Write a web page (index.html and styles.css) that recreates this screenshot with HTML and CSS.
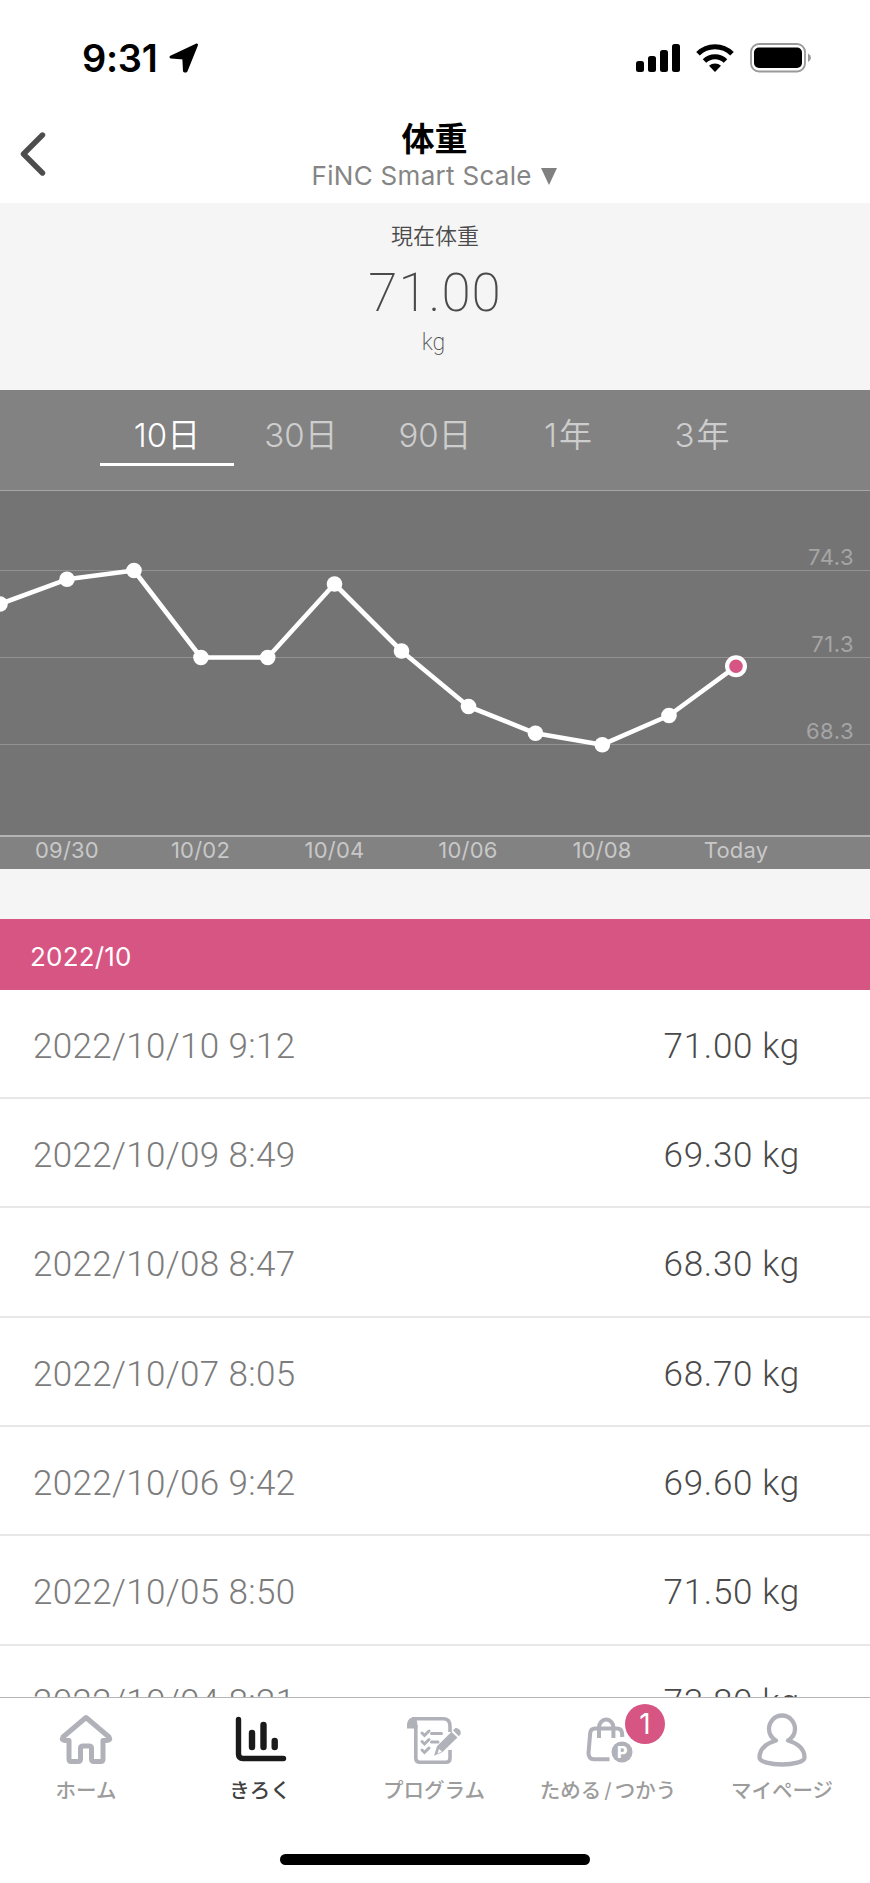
FILE: index.html
```html
<!DOCTYPE html>
<html lang="ja">
<head>
    <meta charset="UTF-8">
    <meta name="viewport" content="width=device-width, initial-scale=1.0">
    <title>体重</title>
    <link rel="stylesheet" href="styles.css">
</head>
<body>
    <div class="status-bar">
        <span class="time">9:31</span>
        <svg class="location" width="30" height="30" viewBox="0 0 30 30">
            <path d="M27.500 2 L2 14 L14.800 15 L15.500 28 L17 28 Z" fill="#000" stroke="#000" stroke-width="3" stroke-linejoin="round"/>
        </svg>
        <svg class="signal" width="44" height="28" viewBox="0 0 44 28">
            <rect x="0" y="17" width="8" height="11" rx="2.500"/>
            <rect x="12" y="12" width="8" height="16" rx="2.500"/>
            <rect x="24" y="6" width="8" height="22" rx="2.500"/>
            <rect x="36" y="0" width="8" height="28" rx="2.500"/>
        </svg>
        <svg class="wifi" width="38" height="28" viewBox="0 0 38 28">
            <path d="M2 9.800 A24 24 0 0 1 36 9.800" fill="none" stroke="#000" stroke-width="5"/>
            <path d="M8.500 17 A15 15 0 0 1 29.500 17" fill="none" stroke="#000" stroke-width="5"/>
            <path d="M13 21.800 A8.700 8.700 0 0 1 25 21.800 L19 28 Z"/>
        </svg>
        <svg class="battery" width="62" height="30" viewBox="0 0 62 30">
            <rect x="1" y="1" width="54" height="27.500" rx="8" fill="none" stroke="#999" stroke-width="1.800"/>
            <rect x="4" y="4.500" width="48" height="20.500" rx="5"/>
            <path d="M58 10.500 Q61 12 61 14.700 Q61 17.500 58 19 Z" fill="#999"/>
        </svg>
    </div>

    <header class="header">
        <svg class="back" width="26" height="46" viewBox="0 0 26 46">
            <path d="M22.500 4 L3.500 23 L22.500 42" fill="none" stroke="#4d4d4d" stroke-width="5.400" stroke-linecap="round" stroke-linejoin="round"/>
        </svg>
        <div class="titles">
            <h1>体重</h1>
            <p class="device">FiNC Smart Scale <span class="caret"></span></p>
        </div>
    </header>

    <section class="current">
        <p class="current-label">現在体重</p>
        <p class="current-value">71.00</p>
        <p class="current-unit">kg</p>
    </section>

    <nav class="periods">
        <a class="period active">10日</a>
        <a class="period">30日</a>
        <a class="period">90日</a>
        <a class="period year">1年</a>
        <a class="period year">3年</a>
    </nav>

    <svg class="chart" width="870" height="379" viewBox="0 490 870 379">
        <rect class="plot" x="0" y="490" width="870" height="346"/>
        <rect class="axis-strip" x="0" y="836" width="870" height="33"/>
        <g class="grid">
            <line x1="0" y1="570.500" x2="870" y2="570.500"/>
            <line x1="0" y1="657.500" x2="870" y2="657.500"/>
            <line x1="0" y1="744.500" x2="870" y2="744.500"/>
        </g>
        <line class="edge" x1="0" y1="490.500" x2="870" y2="490.500"/>
        <line class="axis" x1="0" y1="836" x2="870" y2="836"/>
        <polyline class="line" points="0,604 67,579.300 134,570.500 201,657.500 267.700,657.500 334.500,584 401.500,651 468.500,706.500 535.500,733.300 602.300,744.700 669,715.500 736,666.300"/>
        <g class="points">
            <circle cx="0" cy="604" r="7.800"/>
            <circle cx="67" cy="579.300" r="7.800"/>
            <circle cx="134" cy="570.500" r="7.800"/>
            <circle cx="201" cy="657.500" r="7.800"/>
            <circle cx="267.700" cy="657.500" r="7.800"/>
            <circle cx="334.500" cy="584" r="7.800"/>
            <circle cx="401.500" cy="651" r="7.800"/>
            <circle cx="468.500" cy="706.500" r="7.800"/>
            <circle cx="535.500" cy="733.300" r="7.800"/>
            <circle cx="602.300" cy="744.700" r="7.800"/>
            <circle cx="669" cy="715.500" r="7.800"/>
            <circle cx="736" cy="666.300" r="11"/>
        </g>
        <circle class="today" cx="736" cy="666.300" r="6.800"/>
        <g class="y-labels">
            <text x="854" y="565.200">74.3</text>
            <text x="854" y="652.200">71.3</text>
            <text x="854" y="739.200">68.3</text>
        </g>
        <g class="x-labels">
            <text x="67" y="857.500">09/30</text>
            <text x="200.500" y="857.500">10/02</text>
            <text x="334.500" y="857.500">10/04</text>
            <text x="468" y="857.500">10/06</text>
            <text x="602" y="857.500">10/08</text>
            <text x="736" y="857.500">Today</text>
        </g>
    </svg>

    <h2 class="month">2022/10</h2>
    <ul class="records">
        <li><span class="date">2022/10/10 9:12</span><span class="weight">71.00 kg</span></li>
        <li><span class="date">2022/10/09 8:49</span><span class="weight">69.30 kg</span></li>
        <li><span class="date">2022/10/08 8:47</span><span class="weight">68.30 kg</span></li>
        <li><span class="date">2022/10/07 8:05</span><span class="weight">68.70 kg</span></li>
        <li><span class="date">2022/10/06 9:42</span><span class="weight">69.60 kg</span></li>
        <li><span class="date">2022/10/05 8:50</span><span class="weight">71.50 kg</span></li>
        <li><span class="date">2022/10/04 8:21</span><span class="weight">73.80 kg</span></li>
    </ul>

    <nav class="tab-bar">
        <div class="tabs">
            <a class="tab">
                <svg width="60" height="56" viewBox="0 0 60 56">
                    <path d="M30 6.500 L7 26 Q5 29.500 9 29.500 L13 29.500 V48 Q13 50.500 15 50.500 H22 Q24.500 50.500 24.500 48 V37 Q24.500 35 27 35 H33 Q35.500 35 35.500 37 V48 Q35.500 50.500 38 50.500 H45 Q47 50.500 47 48 V29.500 H51 Q55 29.500 53 26 Z" fill="none" stroke="#b1b1b9" stroke-width="5" stroke-linejoin="round"/>
                </svg>
                <span>ホーム</span>
            </a>
            <a class="tab active">
                <svg width="60" height="56" viewBox="0 0 60 56">
                    <path d="M8.500 8.500 V43 Q8.500 47.500 13 47.500 H53.500" fill="none" stroke="#1a1a1a" stroke-width="5.400" stroke-linecap="round"/>
                    <path d="M22 22 V36 M33.500 14 V36 M44.700 30 V36" fill="none" stroke="#1a1a1a" stroke-width="6.400" stroke-linecap="round"/>
                </svg>
                <span>きろく</span>
            </a>
            <a class="tab">
                <svg width="60" height="56" viewBox="0 0 60 56">
                    <g fill="none" stroke="#b1b1b9" stroke-width="3.600">
                        <path d="M8 7.800 H39 Q46 7.800 46 15 V21 M46 39 V47 Q46 51.300 42 51.300 H16 Q11.800 51.300 11.800 47 V14"/>
                        <path d="M27.500 22.500 H37.500 M27.500 31 H34" stroke-linecap="round" stroke-width="3"/>
                        <path d="M18 22 L20.500 24.500 L25 20 M18 30.500 L20.500 33 L25 28.500 M18 39 L20.500 41.500 L25 37" stroke-linecap="round" stroke-width="3"/>
                    </g>
                    <path d="M3 17.500 V13 Q4 6 11 6 Q13.500 8 13.500 17.500 Z" fill="#b1b1b9"/>
                    <path d="M47.500 20.800 L53.500 26.500 L38.500 41 L30 44.800 L33 35.300 Z M49 19.300 L51.500 17 Q53.500 16.500 56 19 Q57.500 21.500 56.500 23.500 L54.700 25.300 Z" fill="#b1b1b9"/>
                    <path d="M35 38 L38 40.500 L33.500 42.500 Z" fill="#fff"/>
                </svg>
                <span>プログラム</span>
            </a>
            <a class="tab">
                <svg width="60" height="56" viewBox="0 0 60 56">
                    <path d="M44.300 26 L44 22 Q43.500 17.500 39 17.500 H17 Q12.800 17.500 12.200 22 L10.500 42 Q10.500 48 16 48.300 H31.500" fill="none" stroke="#b1b1b9" stroke-width="4"/>
                    <path d="M21 27 V16.500 A7.200 8 0 0 1 35.400 16.500 V27" fill="none" stroke="#b1b1b9" stroke-width="4"/>
                    <circle cx="44" cy="41" r="10.500" fill="#b1b1b9"/>
                    <text class="coin" x="44.300" y="46.500">P</text>
                </svg>
                <span>ためる<i>/</i>つかう</span>
                <b class="badge">1</b>
            </a>
            <a class="tab">
                <svg width="60" height="56" viewBox="0 0 60 56">
                    <path d="M24 29.500 C19 26.500 17 22 17 18 A13 13.500 0 0 1 43 18 C43 22 41 26.500 36 29.500 C46 32.500 52.500 38 52.500 46.500 C52.500 51 41 53.500 30 53.500 C19 53.500 7.500 51 7.500 46.500 C7.500 38 14 32.500 24 29.500 Z" fill="none" stroke="#b1b1b9" stroke-width="4.300" stroke-linejoin="round"/>
                </svg>
                <span>マイページ</span>
            </a>
        </div>
        <div class="home-indicator"></div>
    </nav>
</body>
</html>
```
FILE: styles.css
```css
* {
    margin: 0;
    padding: 0;
    box-sizing: border-box;
}
body {
    width: 870px;
    height: 1883px;
    overflow: hidden;
    display: flex;
    flex-direction: column;
    background-color: #f5f5f5;
    font-family: Inter, "Noto Sans CJK JP", sans-serif;
    color: #4a4a4a;
}
svg {
    display: block;
    flex-shrink: 0;
}
.status-bar {
    height: 116px;
    flex-shrink: 0;
    display: flex;
    align-items: center;
    padding: 0 58px 0 82px;
    background-color: #fff;
}
.time {
    width: 87px;
    font-size: 38px;
    font-weight: 600;
    letter-spacing: -0.3px;
    color: #000;
}
.signal {
    margin-left: auto;
}
.wifi {
    margin-left: 16px;
}
.battery {
    margin-left: 16px;
}
.header {
    height: 87px;
    flex-shrink: 0;
    display: flex;
    padding-left: 20px;
    background-color: #fff;
}
.back {
    margin-top: 15px;
}
.titles {
    flex: 1;
    margin-right: 47px;
    padding-top: 1px;
    text-align: center;
}
h1 {
    font-size: 33px;
    line-height: 44px;
    font-weight: 700;
    color: #000;
}
.device {
    font-size: 26px;
    line-height: 30px;
    font-weight: 400;
    letter-spacing: 0.3px;
    color: #858585;
}
.caret {
    display: inline-block;
    margin-left: 2px;
    border: 8.5px solid transparent;
    border-top: 17px solid #808080;
    border-bottom: 0;
}
.current {
    height: 187px;
    flex-shrink: 0;
    padding-top: 16px;
    text-align: center;
}
.current-label {
    font-size: 22px;
    line-height: 34px;
    font-weight: 350;
}
.current-value {
    font-family: Roboto, sans-serif;
    font-size: 53px;
    line-height: 80px;
    font-weight: 200;
    letter-spacing: 1px;
}
.current-unit {
    margin-left: -3px;
    font-family: Roboto, sans-serif;
    font-size: 23px;
    line-height: 20px;
    font-weight: 200;
}
.periods {
    height: 100px;
    flex-shrink: 0;
    display: flex;
    padding: 0 100px;
    background-color: #828282;
}
.period {
    width: 134px;
    height: 76px;
    line-height: 90px;
    text-align: center;
    font-size: 33px;
    font-weight: 350;
    color: #cdcdcd;
}
.period.active {
    color: #fff;
    border-bottom: 3px solid #fff;
}
.period.year {
    letter-spacing: 2px;
}
.plot {
    fill: #747474;
}
.axis-strip {
    fill: #828282;
}
.grid line {
    stroke: #929292;
}
.edge {
    stroke: #a5a5a5;
}
.axis {
    stroke: #b4b4b4;
    stroke-width: 2;
}
.line {
    fill: none;
    stroke: #fff;
    stroke-width: 4.6;
    stroke-linejoin: round;
}
.points {
    fill: #fff;
}
.today {
    fill: #d75583;
}
.y-labels {
    font-size: 22px;
    letter-spacing: 0.5px;
    fill: #a5a5a5;
    text-anchor: end;
}
.x-labels {
    font-size: 22px;
    letter-spacing: 0.2px;
    fill: #c8c8c8;
    text-anchor: middle;
}
.month {
    height: 71px;
    flex-shrink: 0;
    margin-top: 49.5px;
    padding-left: 30px;
    line-height: 76px;
    font-size: 26px;
    font-weight: 400;
    letter-spacing: 0.2px;
    color: #fff;
    background-color: #d75583;
}
.records {
    flex: 1;
    min-height: 0;
    overflow: hidden;
    list-style: none;
    background-color: #fff;
}
.records li {
    height: 109.4px;
    display: flex;
    justify-content: space-between;
    padding: 0 70px 0 33px;
    line-height: 113px;
    font-family: Roboto, sans-serif;
    font-size: 35px;
    font-weight: 300;
    border-bottom: 2px solid #e6e8e7;
}
.date {
    letter-spacing: 0.35px;
    color: #7c7c7c;
}
.weight {
    letter-spacing: 0.7px;
}
.tab-bar {
    height: 186px;
    flex-shrink: 0;
    border-top: 1px solid #b5b5b5;
    background-color: #fff;
}
.tabs {
    height: 156px;
    display: flex;
    margin-left: -1px;
}
.tab {
    position: relative;
    width: 174px;
    padding-top: 13px;
    display: flex;
    flex-direction: column;
    align-items: center;
    font-size: 20.5px;
    font-weight: 500;
    line-height: 30px;
    color: #9c9c9c;
}
.tab span {
    margin-top: 7px;
    font-family: "Noto Sans CJK JP", sans-serif;
}
.tab i {
    margin: 0 3px;
    font-family: Inter, sans-serif;
    font-style: normal;
    font-weight: 400;
}
.tab.active {
    color: #404040;
}
.coin {
    font-size: 16px;
    font-weight: 800;
    fill: #fff;
    text-anchor: middle;
}
.badge {
    position: absolute;
    top: 6px;
    left: 104px;
    width: 40px;
    height: 40px;
    border-radius: 50%;
    background-color: #d75583;
    color: #fff;
    font-size: 28px;
    font-weight: 400;
    line-height: 40px;
    text-align: center;
}
.home-indicator {
    width: 310px;
    height: 11px;
    margin: 0 auto;
    border-radius: 6px;
    background-color: #000;
}
```
